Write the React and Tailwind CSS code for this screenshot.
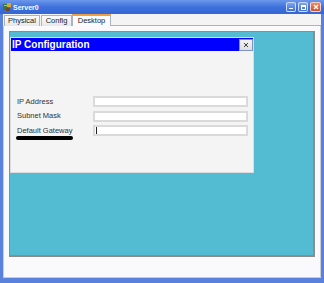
export default function App() {
  const font = { fontFamily: '"Liberation Sans", Arial, sans-serif' };
  return (
    <div
      className="w-[324px] h-[283px] flex flex-col bg-[#5a82dc] overflow-hidden"
      style={font}
    >
      {/* Title bar */}
      <div className="h-[14px] shrink-0 flex items-center bg-gradient-to-b from-[#6c98ea] via-[#3f72dc] to-[#3466d4] pl-[3px] pr-[3px]">
        <svg width="8" height="8" viewBox="0 0 8 8" className="mr-[2px]">
          <rect x="0" y="1" width="5" height="6" fill="#3b7a2a" />
          <rect x="1" y="2" width="3" height="1" fill="#a8d070" />
          <rect x="4" y="0" width="4" height="4" fill="#d9a53a" />
          <rect x="3" y="5" width="4" height="3" fill="#6b4a2a" />
        </svg>
        <span className="text-white font-bold text-[7px] leading-none">Server0</span>
        <div className="ml-auto flex items-center gap-[2px]">
          <div className="w-[10px] h-[10px] rounded-[2px] border border-white/70 bg-gradient-to-b from-[#7ea4f0] to-[#3d6fdc] flex items-end justify-center pb-[2px]">
            <div className="w-[4px] h-[1.5px] bg-white" />
          </div>
          <div className="w-[10px] h-[10px] rounded-[2px] border border-white/70 bg-gradient-to-b from-[#7ea4f0] to-[#3d6fdc] flex items-center justify-center">
            <div className="w-[5px] h-[5px] border border-white border-t-2" />
          </div>
          <div className="w-[11px] h-[10px] rounded-[2px] border border-white/70 bg-gradient-to-b from-[#f08a62] to-[#d4492a] flex items-center justify-center">
            <svg width="6" height="6" viewBox="0 0 6 6">
              <path d="M1 1 L5 5 M5 1 L1 5" stroke="white" strokeWidth="1.4" />
            </svg>
          </div>
        </div>
      </div>

      {/* Body */}
      <div className="h-[264px] shrink-0 mx-[3px] bg-[#ecedf6] flex flex-col">
        {/* Tabs */}
        <div className="h-[12px] shrink-0 flex items-end pl-[1px] pt-[1px] bg-[#f4f4f4]">
          <div className="h-[11px] w-[36px] flex items-center justify-center border border-b-0 border-[#a9b4c2] bg-gradient-to-b from-[#fbfbfb] to-[#e7e8ea] text-[7.5px] text-[#222] leading-none">
            Physical
          </div>
          <div className="h-[11px] w-[31px] ml-[1px] flex items-center justify-center border border-b-0 border-[#a9b4c2] bg-gradient-to-b from-[#fbfbfb] to-[#e7e8ea] text-[7.5px] text-[#222] leading-none">
            Config
          </div>
          <div className="h-[12px] w-[39px] flex items-center justify-center border border-b-0 border-[#a9b4c2] border-t-2 border-t-[#f0a040] bg-[#fcfcfe] text-[7.5px] text-[#222] leading-none">
            Desktop
          </div>
          <div className="flex-1 h-full border-b border-[#a9b4c2]" />
        </div>

        {/* Panel */}
        <div className="h-[252px] shrink-0 bg-[#fafafc] border-x border-b border-[#c8cdd8] pt-[5px] px-[5px]">
          <div className="h-[226px] bg-[#53bcd2] border border-[#8c8c8c] border-r-2 border-b-2 pt-[5px]">
            {/* IP Configuration dialog */}
            <div className="w-[244px] h-[136px] border border-[#dcdcdc] bg-[#f4f4f4] flex flex-col">
              <div className="h-[13px] flex items-stretch bg-[#0000ff]">
                <span className="flex-1 text-white font-bold text-[10px] leading-[13px] pl-[1px]">
                  IP Configuration
                </span>
                <div className="w-[14px] h-[12px] mt-[1px] bg-gradient-to-b from-[#f4f4f4] to-[#dedede] border border-[#7f93c8] flex items-center justify-center">
                  <svg width="6" height="6" viewBox="0 0 6 6">
                    <path d="M1 1 L5 5 M5 1 L1 5" stroke="#444" strokeWidth="1" />
                  </svg>
                </div>
              </div>
              <div className="flex flex-col gap-[3.5px] pt-[45px] pl-[6px] pr-[5px]">
                <div className="flex items-center h-[11px]">
                  <span className="w-[76px] text-[7.5px] text-[#333] leading-none">IP Address</span>
                  <div className="flex-1 h-[11px] bg-white border-2 border-[#dadada]" />
                </div>
                <div className="flex items-center h-[11px]">
                  <span className="w-[76px] text-[7.5px] text-[#333] leading-none">Subnet Mask</span>
                  <div className="flex-1 h-[11px] bg-white border-2 border-[#dadada]" />
                </div>
                <div className="flex items-center h-[11px]">
                  <span className="relative w-[76px] text-[7.5px] text-[#333] leading-none">
                    Default Gateway
                    <span className="absolute left-[-1px] top-[9px] w-[57px] h-[4px] rounded-full bg-black" />
                  </span>
                  <div className="flex-1 h-[11px] bg-white border-2 border-[#dadada] flex items-center pl-[1px]">
                    <div className="w-[1px] h-[7px] bg-[#222]" />
                  </div>
                </div>
              </div>
            </div>
          </div>
        </div>
      </div>
    </div>
  );
}
